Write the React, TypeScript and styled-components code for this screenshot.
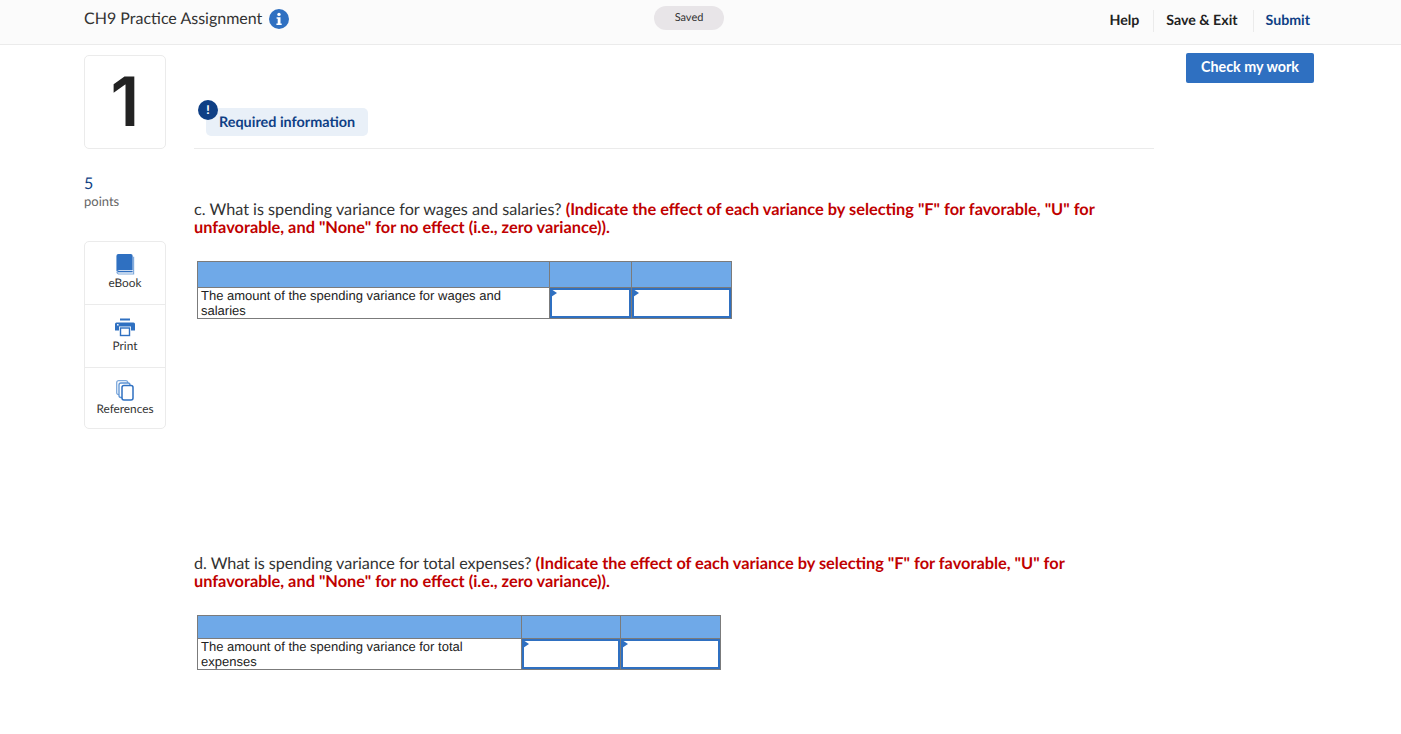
import styled, { createGlobalStyle } from "styled-components";

const GlobalStyle = createGlobalStyle`
  html, body {
    margin: 0;
    padding: 0;
    background: #fff;
    font-family: "Lato", "Liberation Sans", sans-serif;
    text-rendering: geometricPrecision;
    color: #222;
  }
`;

const questions = [
  {
    id: "c",
    text: "c. What is spending variance for wages and salaries?",
    tracking: 0,
    label: "The amount of the spending variance for wages and salaries",
    widths: [352, 82, 100],
    headHeight: 26,
    labelWidth: 320,
  },
  {
    id: "d",
    text: "d. What is spending variance for total expenses?",
    tracking: -0.06,
    label: "The amount of the spending variance for total expenses",
    widths: [324, 99, 100],
    headHeight: 23,
    labelWidth: 290,
  },
];

const InfoIcon = () => (
  <svg width="20" height="20" viewBox="0 0 20 20">
    <circle cx="10" cy="10" r="10" fill="#2f70c1" />
    <circle cx="10" cy="5.4" r="1.7" fill="#fff" />
    <path d="M7.6 8.2h3.9v6.2h1.2v1.6H7.4v-1.6h1.3V9.8H7.6z" fill="#fff" />
  </svg>
);

const BookIcon = () => (
  <svg width="19" height="22" viewBox="0 0 19 22">
    <path d="M2 0h13a2 2 0 0 1 2 2v15H3a2 2 0 0 0-1 .3L0 18V2a2 2 0 0 1 2-2z" fill="#2f70c1" />
    <path d="M18 3v18H3a2.5 2.5 0 0 1-2.5-2.5" fill="none" stroke="#7ea9dc" strokeWidth="1.2" />
    <path d="M1 18.5h16" stroke="#2f70c1" strokeWidth="1.4" />
  </svg>
);

const PrintIcon = () => (
  <svg width="20" height="18" viewBox="0 0 20 18">
    <rect x="5" y="0" width="10" height="2" fill="#2f70c1" />
    <path d="M1.5 4h17A1.5 1.5 0 0 1 20 5.5V12h-4V8H4v4H0V5.5A1.5 1.5 0 0 1 1.5 4z" fill="#2f70c1" />
    <rect x="5.5" y="9.5" width="9" height="7.5" fill="#fff" stroke="#2f70c1" strokeWidth="1.4" />
    <rect x="2" y="5.6" width="1.6" height="1.4" fill="#fff" />
  </svg>
);

const RefIcon = () => (
  <svg width="18" height="21" viewBox="0 0 18 21">
    <rect x="0.7" y="0.7" width="11" height="14" rx="2" fill="#fff" stroke="#7ea9dc" strokeWidth="1.3" />
    <rect x="3" y="3" width="11" height="14.5" rx="2" fill="#fff" stroke="#5c93d3" strokeWidth="1.3" />
    <rect x="6" y="5.6" width="11" height="14.5" rx="2" fill="#fff" stroke="#2f70c1" strokeWidth="1.5" />
  </svg>
);

const App = () => {
  return (
    <>
      <GlobalStyle />
      <Header>
        <TitleBox>
          <Title>CH9 Practice Assignment</Title>
          <InfoIcon />
        </TitleBox>
        <SavedPill>Saved</SavedPill>
        <HeaderNav>
          <NavLink>Help</NavLink>
          <NavLink $gap={14}>Save &amp; Exit</NavLink>
          <NavLink $gap={15} $primary>
            Submit
          </NavLink>
        </HeaderNav>
      </Header>
      <Page>
        <Side>
          <NumberCard>1</NumberCard>
          <Points>5</Points>
          <PointsLabel>points</PointsLabel>
          <ToolCard>
            <Tool>
              <BookIcon />
              <ToolLabel>eBook</ToolLabel>
            </Tool>
            <Tool>
              <PrintIcon />
              <ToolLabel>Print</ToolLabel>
            </Tool>
            <Tool>
              <RefIcon />
              <ToolLabel>References</ToolLabel>
            </Tool>
          </ToolCard>
        </Side>
        <Main>
          <RequiredBar>
            <RequiredTag>
              <Bang>!</Bang>
              Required information
            </RequiredTag>
          </RequiredBar>
          {questions.map((q) => (
            <Question key={q.id}>
              <Prompt>
                <Lead $tracking={q.tracking}>{q.text}</Lead>{" "}
                <Hint>
                  (Indicate the effect of each variance by selecting "F" for favorable, "U" for
                  <br />
                  unfavorable, and "None" for no effect (i.e., zero variance)).
                </Hint>
              </Prompt>
              <AnswerTable>
                <colgroup>
                  {q.widths.map((w, i) => (
                    <AnswerCol key={i} $width={w} />
                  ))}
                </colgroup>
                <tbody>
                  <AnswerRow $height={q.headHeight}>
                    <HeadCell />
                    <HeadCell />
                    <HeadCell />
                  </AnswerRow>
                  <AnswerRow $height={30}>
                    <LabelCell>
                      <LabelText $width={q.labelWidth}>{q.label}</LabelText>
                    </LabelCell>
                    <InputCell />
                    <InputCell />
                  </AnswerRow>
                </tbody>
              </AnswerTable>
            </Question>
          ))}
        </Main>
        <Aside>
          <CheckButton>Check my work</CheckButton>
        </Aside>
      </Page>
    </>
  );
};

export default App;

const Header = styled.header`
  position: relative;
  display: flex;
  align-items: center;
  justify-content: space-between;
  height: 44px;
  padding: 0 91px 0 84px;
  background: #fbfbfb;
  border-bottom: 1px solid #ebebeb;
`;

const TitleBox = styled.div`
  display: flex;
  align-items: center;
  gap: 7px;
  margin-top: -7px;
`;

const Title = styled.div`
  font-size: 16px;
  color: #333;
`;

const SavedPill = styled.div`
  position: absolute;
  left: 654px;
  top: 6px;
  width: 70px;
  height: 24px;
  border-radius: 12px;
  background: #e8e5e8;
  font-size: 11px;
  line-height: 23px;
  text-align: center;
  color: #333;
`;

const HeaderNav = styled.nav`
  display: flex;
  align-items: center;
  margin-top: -3px;
`;

const NavLink = styled.a<{ $gap?: number; $primary?: boolean }>`
  font-size: 14.2px;
  font-weight: 700;
  line-height: 22px;
  padding-left: ${(p) => (p.$gap ? "12px" : "0")};
  margin-left: ${(p) => p.$gap ?? 0}px;
  border-left: ${(p) => (p.$gap ? "1px solid #ebebeb" : "none")};
  color: ${(p) => (p.$primary ? "#0f3f85" : "#222")};
`;

const Page = styled.div`
  display: flex;
  padding-left: 84px;
`;

const Side = styled.aside`
  width: 82px;
  flex: none;
  padding-top: 10px;
`;

const NumberCard = styled.div`
  box-sizing: border-box;
  height: 94px;
  border: 1px solid #ebebeb;
  border-radius: 5px;
  font-family: "Inter", "Lato", sans-serif;
  font-size: 68px;
  font-weight: 600;
  line-height: 93px;
  text-align: center;
  color: #222;
`;

const Points = styled.div`
  margin-top: 26px;
  font-size: 16px;
  line-height: 18px;
  color: #0f3f85;
`;

const PointsLabel = styled.div`
  font-size: 13px;
  line-height: 16px;
  color: #666;
`;

const ToolCard = styled.div`
  box-sizing: border-box;
  margin-top: 32px;
  border: 1px solid #ebebeb;
  border-radius: 5px;
  height: 188px;
  display: grid;
  grid-template-rows: 62px 63px 1fr;
`;

const Tool = styled.div`
  display: flex;
  flex-direction: column;
  align-items: center;
  justify-content: flex-start;
  padding-top: 12px;
  height: 100%;
  box-sizing: border-box;

  & + & {
    border-top: 1px solid #ebebeb;
  }

  svg {
    height: 21px;
  }
`;

const ToolLabel = styled.div`
  font-size: 11.8px;
  line-height: 16px;
  color: #333;
`;

const Main = styled.main`
  width: 960px;
  flex: none;
  margin-left: 28px;
`;

const RequiredBar = styled.div`
  height: 104px;
  box-sizing: border-box;
  border-bottom: 1px solid #ebebeb;
  padding: 63px 0 0 12px;
`;

const RequiredTag = styled.div`
  position: relative;
  display: inline-block;
  height: 28px;
  padding: 0 13px;
  border-radius: 5px;
  background: #e9f0f8;
  color: #0f3f85;
  font-size: 14.4px;
  font-weight: 700;
  line-height: 30px;
`;

const Bang = styled.span`
  position: absolute;
  left: -8px;
  top: -8px;
  width: 20px;
  height: 20px;
  border-radius: 50%;
  background: #0f3f85;
  color: #fff;
  font-size: 12px;
  font-weight: 900;
  line-height: 20px;
  text-align: center;
`;

const Question = styled.section`
  padding-top: 52px;
  height: 354px;
  box-sizing: border-box;

  & + & {
    height: auto;
  }
`;

const Prompt = styled.p`
  margin: 0 0 24px;
  font-size: 16.2px;
  line-height: 18px;
  color: #333;
`;

const Lead = styled.span<{ $tracking: number }>`
  letter-spacing: ${(p) => p.$tracking}px;
`;

const Hint = styled.strong`
  font-size: 16.35px;
  font-weight: 700;
  color: #c00000;
`;

const AnswerTable = styled.table`
  margin-left: 3px;
  border-collapse: collapse;
  table-layout: fixed;
  width: fit-content;
`;

const AnswerCol = styled.col<{ $width: number }>`
  width: ${(p) => p.$width}px;
`;

const AnswerRow = styled.tr<{ $height: number }>`
  height: ${(p) => p.$height}px;
`;

const HeadCell = styled.td`
  padding: 0;
  background: #6fa9e8;
  border: 1px solid #7b7b7b;
`;

const LabelCell = styled.td`
  padding: 0 3px;
  border: 1px solid #7b7b7b;
  vertical-align: middle;
`;

const LabelText = styled.div<{ $width: number }>`
  width: ${(p) => p.$width}px;
  font-family: "Liberation Sans", Arial, sans-serif;
  font-size: 13px;
  line-height: 15px;
  color: #222;
`;

const InputCell = styled.td`
  position: relative;
  padding: 0;
  border: 1px solid #7b7b7b;
  box-shadow: inset 0 0 0 2px #2f70c1;

  &::before {
    content: "";
    position: absolute;
    left: 1px;
    top: 1px;
    border-left: 6px solid #2f70c1;
    border-top: 4px solid transparent;
    border-bottom: 4px solid transparent;
  }
`;

const Aside = styled.div`
  flex: none;
  margin-left: 32px;
  padding-top: 8px;
`;

const CheckButton = styled.button`
  width: 128px;
  height: 30px;
  padding: 0 0 4px;
  border: none;
  border-radius: 2px;
  background: #2f70c1;
  color: #fff;
  font-family: inherit;
  font-size: 14.3px;
  font-weight: 700;
`;
